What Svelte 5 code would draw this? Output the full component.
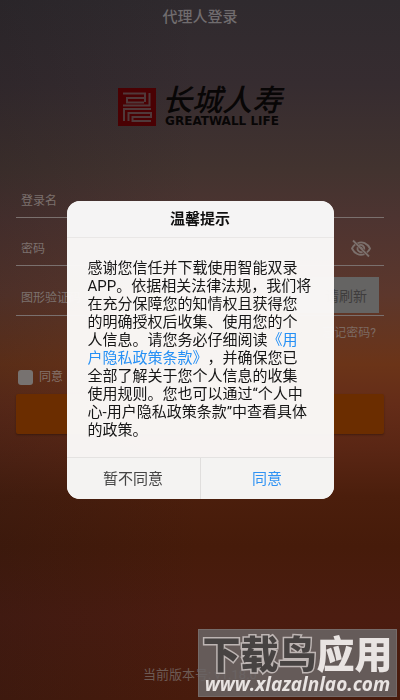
<script>
  let account = $state('');
  let password = $state('');
  let captcha = $state('');
  let agreed = $state(false);
  let showDialog = $state(true);
</script>

<div class="page">
  <header><h1>代理人登录</h1></header>

  <div class="brand">
    <svg width="38" height="38" viewBox="0 0 38 38" aria-hidden="true">
      <rect width="38" height="38" fill="#4a0103" />
      <g fill="none" stroke="#50393a" stroke-width="2">
        <path d="M5 5.500H27V10H9V14.500H26" />
        <path d="M31.500 5V17.500H5M27 14V5" />
        <path d="M6 33V21H33M10.500 33V25H33V29H14.500V33H33" />
      </g>
    </svg>
    <div class="names">
      <span class="cn">长城人寿</span>
      <span class="en">GREATWALL LIFE</span>
    </div>
  </div>

  <form onsubmit={(e) => e.preventDefault()}>
    <div class="field">
      <input type="text" aria-label="登录名" placeholder="登录名" bind:value={account} />
    </div>
    <div class="field">
      <input type="password" aria-label="密码" placeholder="密码" bind:value={password} />
      <button class="eye" type="button" aria-label="显示密码">
        <svg width="20" height="20" viewBox="0 0 20 20" fill="none" stroke="#7c706c" stroke-width="1.8">
          <path d="M6.5 4.2C11.500 2 16.500 4.500 19 9.500C18.300 11 17.300 12.300 16 13.400M13.500 15.100C8.500 17 3.500 14.700 1 9.500C1.800 7.900 2.800 6.600 4.200 5.600" />
          <path d="M8 6.300C11 5 13.800 7.500 13.300 10.500M11.600 13C8.500 14 5.700 11.500 6.600 8.200" />
          <path d="M8.800 8.800C9.800 8 11.400 9 11 10.500" />
          <path d="M2 1.500L18 17.500" />
        </svg>
      </button>
    </div>
    <div class="field code">
      <input type="text" aria-label="图形验证码" placeholder="图形验证码" bind:value={captcha} />
      <button class="refresh" type="button">请刷新</button>
    </div>
    <a class="forgot" href="#forgot">忘记密码?</a>
    <label class="agree"><input type="checkbox" bind:checked={agreed} />同意</label>
    <button class="submit" type="submit" aria-label="登录"></button>
  </form>

  <footer>当前版本号: v1.18.0</footer>
</div>

{#if showDialog}
  <div class="overlay">
    <div class="dialog" role="dialog" aria-modal="true" aria-labelledby="tip">
      <h2 id="tip">温馨提示</h2>
      <p>感谢您信任并下载使用智能双录APP。依据相关法律法规，我们将在充分保障您的知情权且获得您的明确授权后收集、使用您的个人信息。请您务必仔细阅读<a href="#privacy">《用户隐私政策条款》</a>，并确保您已全部了解关于您个人信息的收集使用规则。您也可以通过“个人中心-用户隐私政策条款”中查看具体的政策。</p>
      <div class="actions">
        <button type="button" onclick={() => (showDialog = false)}>暂不同意</button>
        <button type="button" class="ok" onclick={() => (showDialog = false)}>同意</button>
      </div>
    </div>
  </div>
{/if}

<div class="watermark">
  <div class="mark"><span class="dark">下载鸟</span><span class="light">应用</span></div>
  <div class="url">www.xlazalnlao.com</div>
</div>

<style>
  :global(body) {
    margin: 0;
    font-family: Roboto, 'Noto Sans CJK SC', sans-serif;
    text-spacing-trim: space-all;
  }
  button,
  input {
    font-family: inherit;
    border: 0;
    margin: 0;
    padding: 0;
    background: none;
  }
  .page {
    box-sizing: border-box;
    min-height: 100vh;
    display: flex;
    flex-direction: column;
    background:
      linear-gradient(90deg, rgba(20, 18, 22, 0.2), transparent 50%),
      linear-gradient(180deg, #2f2a2e 0%, #362c30 12%, #42332f 24%, #4d3431 31%, #5c372c 42%, #6b3418 52%, #642c18 58%, #5a2614 64%, #4b1e0c 71%, #461b0a 78%, #4b1c10 88%, #481b0c 100%);
  }
  header {
    height: 34px;
    display: flex;
    align-items: center;
    justify-content: center;
  }
  h1 {
    margin: 0;
    font-size: 15px;
    line-height: 18px;
    font-weight: 500;
    color: #706c6e;
  }
  .brand {
    display: flex;
    justify-content: center;
    gap: 6px;
    margin-top: 54px;
    height: 38px;
  }
  .names {
    display: flex;
    flex-direction: column;
    align-items: center;
    color: #080606;
  }
  .cn {
    font-size: 30px;
    line-height: 26px;
    font-weight: 500;
    font-style: italic;
  }
  .en {
    font: bold 12px/14px 'DejaVu Sans', sans-serif;
    white-space: nowrap;
  }
  form {
    display: flex;
    flex-direction: column;
    margin: 44px 16px 0;
  }
  .field {
    display: flex;
    align-items: center;
    height: 48px;
    box-sizing: border-box;
    padding: 14px 5px 0;
    border-bottom: 1px solid #7a706e;
  }
  .code {
    height: 50px;
  }
  .field input {
    flex: 1;
    min-width: 0;
    font-size: 12px;
    line-height: 18px;
    color: #7c716e;
    outline: 0;
  }
  .field input::placeholder {
    color: #7c716e;
    opacity: 1;
  }
  .eye {
    display: flex;
    margin-right: 8px;
  }
  .refresh {
    width: 92px;
    height: 36px;
    margin-top: -6px;
    padding-right: 12px;
    text-align: right;
    background: #656463;
    color: #3f3d3d;
    font-size: 14px;
  }
  .forgot {
    align-self: flex-end;
    margin: 8px 8px 0;
    font-size: 12px;
    line-height: 18px;
    color: #7c6a62;
    text-decoration: none;
  }
  .agree {
    display: flex;
    align-items: center;
    gap: 6px;
    margin: 26px 2px 8px;
    font-size: 12px;
    line-height: 18px;
    color: #85746d;
  }
  .agree input {
    appearance: none;
    width: 15px;
    height: 15px;
    border-radius: 3px;
    background: #777270;
  }
  .submit {
    height: 40px;
    border-radius: 2px;
    background: #6b2d00;
    box-shadow: 0 1px 2px rgba(0, 0, 0, 0.3);
  }
  footer {
    margin-top: auto;
    padding-bottom: 16px;
    text-align: center;
    font-size: 13px;
    line-height: 18px;
    color: #6d5a54;
  }
  .overlay {
    position: fixed;
    inset: 0;
    display: flex;
    align-items: center;
    justify-content: center;
  }
  .dialog {
    width: 67%;
    max-width: 267px;
    overflow: hidden;
    border-radius: 13px;
    background: rgba(250, 248, 247, 0.98);
  }
  h2 {
    margin: 0;
    font-size: 15px;
    line-height: 36px;
    font-weight: 700;
    text-align: center;
    color: #111;
    background: #f5f4f4;
    border-bottom: 1px solid #e9e7e6;
  }
  p {
    margin: 0;
    padding: 21px 22px 18px 21px;
    font-size: 15px;
    line-height: 18px;
    color: #161616;
  }
  p a {
    color: #2590f5;
    text-decoration: none;
  }
  .actions {
    display: flex;
    height: 41px;
    border-top: 1px solid #e4e2e1;
    background: #f4f3f2;
  }
  .actions button {
    flex: 1;
    padding-bottom: 2px;
    font-size: 15px;
    color: #444;
  }
  .actions .ok {
    border-left: 1px solid #e0dedd;
    color: #2f92f3;
  }
  .watermark {
    position: fixed;
    right: 3px;
    bottom: 3px;
    box-sizing: border-box;
    width: 199px;
    height: 68px;
    padding-top: 6px;
    border: 1px solid #756b69;
    background: rgba(106, 101, 101, 0.87);
    text-align: center;
    white-space: nowrap;
  }
  .mark {
    font-size: 38px;
    line-height: 38px;
    font-weight: 900;
  }
  .dark {
    color: #474342;
    -webkit-text-stroke: 3px #bdb5b3;
    paint-order: stroke fill;
  }
  .light {
    color: #e9e4e2;
  }
  .url {
    font: italic bold 19px/20px 'Open Sans', sans-serif;
    color: #e9e4e2;
  }
</style>
